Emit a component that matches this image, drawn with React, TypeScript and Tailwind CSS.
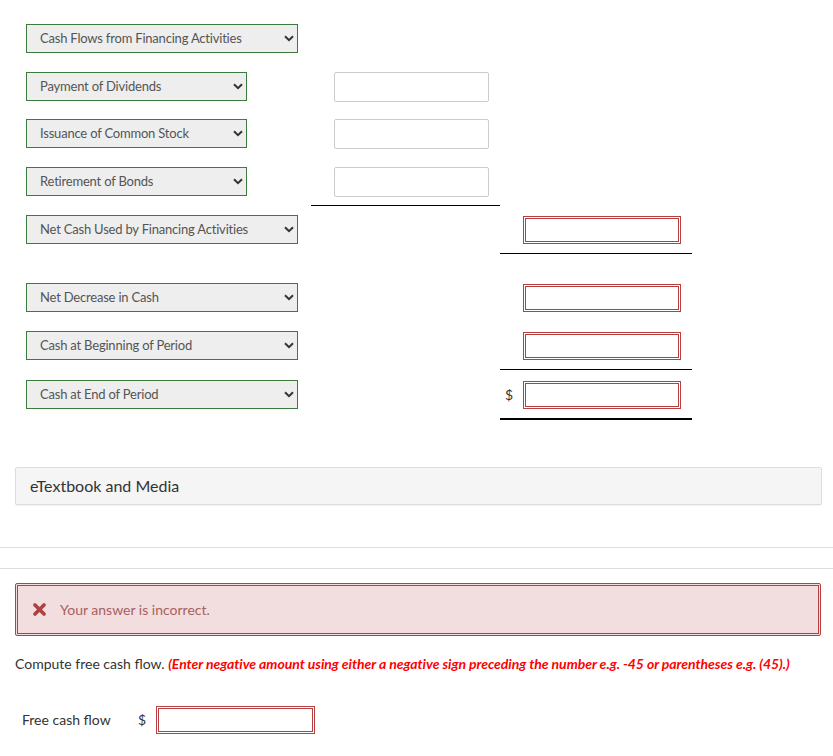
import type { ReactNode } from "react";

const font = { fontFamily: "Lato, 'Open Sans', sans-serif" };

function Chevron() {
  return (
    <svg width="10" height="7" viewBox="0 0 10 7" className="shrink-0">
      <path d="M1 1.2 5 5.2 9 1.2" fill="none" stroke="#333" strokeWidth="2" />
    </svg>
  );
}

function Select({ label, wide }: { label: string; wide?: boolean }) {
  return (
    <div
      className={`flex h-[29px] items-center justify-between border border-[#3d7a3d] bg-[#eeeeee] pl-[13px] pr-[3px] text-[13px] text-[#555] ${
        wide ? "w-[272px]" : "w-[221px]"
      }`}
    >
      <span className="tracking-[-0.2px]">{label}</span>
      <Chevron />
    </div>
  );
}

function PlainInput() {
  return <div className="h-[30px] w-[155px] rounded-[2px] border border-[#cccccc] bg-white" />;
}

function RedInput({ w = "w-[158px]" }: { w?: string }) {
  return <div className={`h-[28px] ${w} border-[3px] border-double border-[#b5403f] bg-white`} />;
}

function Row({ label, wide, col1, col2 }: { label: string; wide?: boolean; col1?: ReactNode; col2?: ReactNode }) {
  return (
    <div className="flex h-[29px] items-center">
      <div className="w-[311px] pl-[26px]">
        <Select label={label} wide={wide} />
      </div>
      <div className="w-[189px] pl-[23px]">{col1}</div>
      <div className="w-[192px] pl-[23px]">{col2}</div>
    </div>
  );
}

export default function App() {
  return (
    <div className="min-h-[756px] w-[833px] bg-white pt-[24px] text-[#333]" style={font}>
      <Row label="Cash Flows from Financing Activities" wide />
      <div className="mt-[19px]">
        <Row label="Payment of Dividends" col1={<PlainInput />} />
      </div>
      <div className="mt-[18px]">
        <Row label="Issuance of Common Stock" col1={<PlainInput />} />
      </div>
      <div className="mt-[19px]">
        <Row label="Retirement of Bonds" col1={<PlainInput />} />
      </div>
      <div className="mt-[9px] ml-[311px] h-px w-[189px] bg-black" />
      <div className="mt-[9px]">
        <Row label="Net Cash Used by Financing Activities" wide col2={<RedInput />} />
      </div>
      <div className="mt-[9px] ml-[500px] h-px w-[192px] bg-black" />
      <div className="mt-[29px]">
        <Row label="Net Decrease in Cash" wide col2={<RedInput />} />
      </div>
      <div className="mt-[19px]">
        <Row label="Cash at Beginning of Period" wide col2={<RedInput />} />
      </div>
      <div className="mt-[9px] ml-[500px] h-px w-[192px] bg-black" />
      <div className="mt-[10px] flex h-[29px] items-center">
        <div className="w-[311px] pl-[26px]">
          <Select label="Cash at End of Period" wide />
        </div>
        <div className="w-[189px]" />
        <div className="flex w-[192px] items-center">
          <span className="w-[23px] pl-[5px] text-[14px]">$</span>
          <RedInput />
        </div>
      </div>
      <div className="mt-[9px] ml-[500px] h-[2px] w-[192px] bg-black" />

      <div className="mx-[15px] mt-[47px] flex h-[38px] w-[807px] items-center rounded-[2px] border border-[#dddddd] bg-[#f5f5f5] pl-[14px] text-[16px] text-[#333] shadow-[0_1px_1px_rgba(0,0,0,0.05)]">
        eTextbook and Media
      </div>

      <div className="mt-[42px] h-px w-full bg-[#dddddd]" />
      <div className="mt-[20px] h-px w-full bg-[#dddddd]" />

      <div className="mx-[15px] mt-[14px] flex h-[53px] w-[806px] items-center rounded-[2px] border-[3px] border-double border-[#b5403f] bg-[#f2dede] pl-[15px] text-[14px] text-[#a9605e]">
        <svg width="13" height="13" viewBox="0 0 13 13" className="mr-[14px]">
          <path d="M2 2 11 11M11 2 2 11" stroke="#a94442" strokeWidth="3.6" strokeLinecap="round" />
        </svg>
        <span>Your answer is incorrect.</span>
      </div>

      <p className="mt-[18px] pl-[15px] text-[14px] leading-[20px] text-[#333]">
        Compute free cash flow.{" "}
        <span className="font-bold italic tracking-[-0.05px] text-[#ff0000]">
          (Enter negative amount using either a negative sign preceding the number e.g. -45 or parentheses e.g. (45).)
        </span>
      </p>

      <div className="mt-[31px] flex h-[29px] items-center">
        <span className="w-[138px] shrink-0 pl-[22px] text-[14px]">Free cash flow</span>
        <span className="w-[18px] shrink-0 text-[14px]">$</span>
        <RedInput w="w-[159px]" />
      </div>
    </div>
  );
}
